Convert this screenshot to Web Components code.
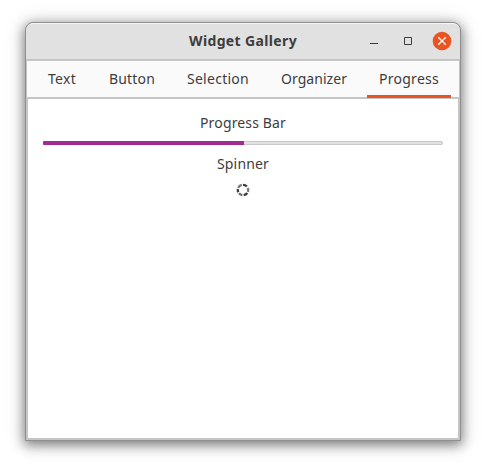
<!DOCTYPE html>
<html lang="en"><head><meta charset="utf-8"><title>Widget Gallery</title>
<style>body{margin:0;background:#fff;width:486px;height:469px;overflow:hidden;font-family:"Noto Sans","Open Sans",sans-serif;font-size:14px;color:#3d3d3d}</style></head><body>
<app-window>
<window-header slot="header"><fit-label width="108">Widget Gallery</fit-label></window-header>
<tab-strip slot="tabs">
<tab-item><fit-label width="28">Text</fit-label></tab-item>
<tab-item><fit-label width="46">Button</fit-label></tab-item>
<tab-item><fit-label width="62">Selection</fit-label></tab-item>
<tab-item><fit-label width="66">Organizer</fit-label></tab-item>
<tab-item active><fit-label width="60">Progress</fit-label></tab-item>
</tab-strip>
<fit-label width="86">Progress Bar</fit-label>
<progress-line value="201"></progress-line>
<fit-label width="52">Spinner</fit-label>
<busy-spinner></busy-spinner>
</app-window>
<script>
const define=(name,html,ready)=>customElements.define(name,class extends HTMLElement{
  connectedCallback(){
    if(this.shadowRoot)return;
    this.attachShadow({mode:"open"}).innerHTML=html;
    if(ready)ready(this,this.shadowRoot);
  }
});
define("app-window",`<style>
:host{display:block;padding:22px 25px 28px}
.frame{box-sizing:border-box;width:436px;height:419px;border:1px solid #8f8f8f;border-radius:8px 8px 0 0;background:#c5c5c5;display:flex;flex-direction:column;overflow:hidden;box-shadow:0 3px 12px 1px rgba(0,0,0,.46),0 2px 22px 2px rgba(0,0,0,.12)}
.content{flex:1;margin:2px;background:#fff;display:flex;flex-direction:column;align-items:center;padding-top:14px}
</style><div class="frame"><slot name="header"></slot><slot name="tabs"></slot><div class="content"><slot></slot></div></div>`);
define("fit-label",`<style>:host{display:block;flex:none;height:20px;line-height:20px;white-space:nowrap}span{display:inline-block}</style><span><slot></slot></span>`,(host,root)=>{
  const span=root.querySelector("span"),w=+host.getAttribute("width");
  host.style.width=w+"px";
  requestAnimationFrame(()=>{
    const n=host.textContent.length,r=span.getBoundingClientRect().width;
    span.style.letterSpacing=((w-r)/n)+"px";
  });
});
define("window-header",`<style>
:host{box-sizing:border-box;display:grid;grid-template-columns:1fr auto 1fr;align-items:center;height:36px;flex:none;background:#e1e1e1;border-top:1px solid #f6f6f6;border-radius:7px 7px 0 0;font-weight:700}
.controls{grid-column:3;justify-self:end;padding:0 8px 1px 0;display:flex}
.title{grid-column:2;padding-bottom:1px}
svg{display:block}
</style><div></div><div class="title"><slot></slot></div><div class="controls"><svg width="84" height="20" viewBox="0 0 84 20"><path d="M2 12.5h8" stroke="#3d3d3d" fill="none"/><path d="M36.5 6.5h7v7h-7z" stroke="#3d3d3d" fill="none"/><circle cx="74" cy="10" r="9.3" fill="#e95420"/><path d="M70.2 6.2l7.6 7.6m0-7.6l-7.6 7.6" stroke="#fff" stroke-width="1.3"/></svg></div>`);
define("tab-strip",`<style>:host{box-sizing:border-box;flex:none;display:flex;gap:8px;height:36px;margin:2px 1px 0;padding-left:9px;background:#fafafa}::slotted(:first-child){margin-right:1px}</style><slot></slot>`);
define("tab-item",`<style>:host{box-sizing:border-box;display:block;height:36px;padding:8px 12px 0;position:relative}
:host([active])::after{content:"";position:absolute;left:0;right:0;bottom:-1px;height:3px;background:#e95420}</style><slot></slot>`);
define("progress-line",`<style>:host{box-sizing:border-box;display:block;width:400px;height:4px;margin:8px 0 9px;border:1px solid #c8c8c8;border-radius:2px;background:#e1e1e1}
.fill{height:4px;margin:-1px;background:#a32a94;border-radius:1px 0 0 1px}</style><div class="fill"></div>`,(h,r)=>{r.querySelector(".fill").style.width=h.getAttribute("value")+"px"});
define("busy-spinner",`<style>:host{display:block;width:16px;height:16px;margin-top:8px}svg{display:block}</style>
<svg width="16" height="16" viewBox="0 0 16 16"><g fill="none" stroke="#3d3d3d" stroke-width="2.3">
<path d="M3.2 5.9A5.2 5.2 0 0 1 6.8 2.9" opacity=".7"/><path d="M8 2.8A5.2 5.2 0 0 1 11.9 4.5"/><path d="M12.8 6A5.2 5.2 0 0 1 12.9 9.8" opacity=".7"/><path d="M12.3 11A5.2 5.2 0 0 1 8.7 13.1"/><path d="M7.4 13.1A5.2 5.2 0 0 1 4 11.3" opacity=".75"/><path d="M3.3 10.2A5.2 5.2 0 0 1 2.9 6.9"/></g></svg>`);
</script></body></html>
